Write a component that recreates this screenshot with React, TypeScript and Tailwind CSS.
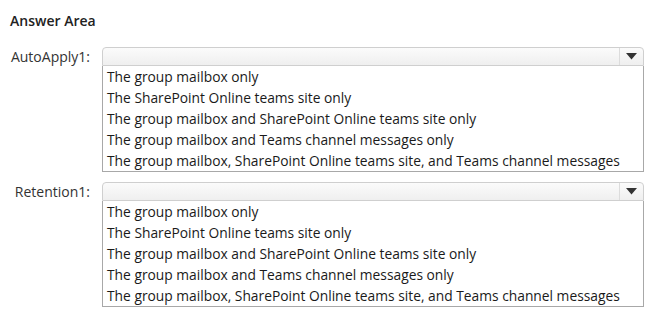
const options = [
  "The group mailbox only",
  "The SharePoint Online teams site only",
  "The group mailbox and SharePoint Online teams site only",
  "The group mailbox and Teams channel messages only",
  "The group mailbox, SharePoint Online teams site, and Teams channel messages",
];

function Dropdown({ label }: { label: string }) {
  return (
    <div className="flex">
      <div className="w-[92px] shrink-0 pr-[12px] text-right text-[14px] leading-[18px] text-[#333] pt-[1px]">
        {label}
      </div>
      <div className="w-[542px]">
        <div className="flex h-[19px] rounded-t-[4px] border border-[#cfcfcf] bg-gradient-to-b from-[#fbfbfb] to-[#efefef]">
          <div className="flex-1" />
          <div className="flex w-[24px] items-center justify-center border-l border-[#dcdcdc]">
            <svg width="11" height="7" viewBox="0 0 11 7">
              <path d="M0 0H11L5.5 6.5Z" fill="#333" />
            </svg>
          </div>
        </div>
        <div className="border border-t-0 border-[#a8a8a8] bg-white pl-[4px]">
          {options.map((o) => (
            <div key={o} className="h-[21px] text-[13.8px] leading-[21px] text-[#1a1a1a] whitespace-nowrap">
              {o}
            </div>
          ))}
        </div>
      </div>
    </div>
  );
}

export default function App() {
  return (
    <div className="h-[327px] w-[668px] bg-white pl-[10px] pt-[11px] font-['Open_Sans',sans-serif]">
      <div className="mb-[16px] text-[14px] font-semibold leading-[20px] text-[#222]">Answer Area</div>
      <div className="flex flex-col gap-[10px]">
        <Dropdown label="AutoApply1:" />
        <Dropdown label="Retention1:" />
      </div>
    </div>
  );
}
